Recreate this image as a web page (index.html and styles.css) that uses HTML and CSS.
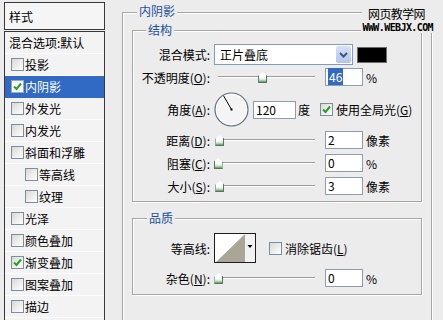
FILE: index.html
```html
<!DOCTYPE html>
<html lang="zh-CN">
<head>
<meta charset="utf-8">
<title>图层样式 - 内阴影</title>
<link rel="stylesheet" href="styles.css">
</head>
<body>
<div class="dialog">
  <aside class="styles-panel">
    <div class="panel-head">样式</div>
    <ul class="style-list">
      <li class="item plain">混合选项:默认</li>
      <li class="item"><span class="cb"></span>投影</li>
      <li class="item selected"><span class="cb"><svg viewBox="0 0 9 9" width="9" height="9"><path d="M1 4.5 L3.5 7 L8 1.5" stroke="#23a323" stroke-width="2" fill="none"/></svg></span>内阴影</li>
      <li class="item"><span class="cb"></span>外发光</li>
      <li class="item"><span class="cb"></span>内发光</li>
      <li class="item"><span class="cb"></span>斜面和浮雕</li>
      <li class="item sub"><span class="cb"></span>等高线</li>
      <li class="item sub"><span class="cb"></span>纹理</li>
      <li class="item"><span class="cb"></span>光泽</li>
      <li class="item"><span class="cb"></span>颜色叠加</li>
      <li class="item"><span class="cb"><svg viewBox="0 0 9 9" width="9" height="9"><path d="M1 4.5 L3.5 7 L8 1.5" stroke="#23a323" stroke-width="2" fill="none"/></svg></span>渐变叠加</li>
      <li class="item"><span class="cb"></span>图案叠加</li>
      <li class="item"><span class="cb"></span>描边</li>
    </ul>
  </aside>

  <section class="group outer">
    <span class="group-title t-outer">内阴影</span>

    <div class="group structure">
      <span class="group-title t-structure">结构</span>

      <div class="row r-blend">
        <span class="label">混合模式:</span>
        <div class="select">
          <span>正片叠底</span>
          <span class="select-btn"><svg width="9" height="6" viewBox="0 0 9 6"><path d="M1 1 L4.5 4.5 L8 1" stroke="#40557d" stroke-width="2" fill="none"/></svg></span>
        </div>
        <span class="swatch"></span>
      </div>

      <div class="row r-opacity">
        <span class="label">不透明度(<u>O</u>):</span>
        <div class="slider"><div class="track"><span class="thumb" style="left:46%"></span></div></div>
        <span class="num"><span class="hl">46</span></span>
        <span class="unit">%</span>
      </div>

      <div class="row r-angle">
        <span class="label">角度(<u>A</u>):</span>
        <svg class="dial" width="35" height="35" viewBox="0 0 35 35">
          <circle cx="17.5" cy="17.5" r="16.5" fill="#f4f4f4" stroke="#5f6f86" stroke-width="1.2"/>
          <circle cx="17.5" cy="17.5" r="15.2" fill="none" stroke="#ffffff" stroke-width="1"/>
          <line x1="17.5" y1="17.5" x2="9.5" y2="3.7" stroke="#000" stroke-width="1"/>
          <rect x="16.5" y="16.5" width="2" height="2" fill="#000"/>
        </svg>
        <span class="num num-wide">120</span>
        <span class="deg">度</span>
        <span class="cb cb-global"><svg viewBox="0 0 9 9" width="9" height="9"><path d="M1 4.5 L3.5 7 L8 1.5" stroke="#23a323" stroke-width="2" fill="none"/></svg></span>
        <span class="cb-label">使用全局光(<u>G</u>)</span>
      </div>

      <div class="row r-slider r-first">
        <span class="label">距离(<u>D</u>):</span>
        <div class="slider"><div class="track"><span class="thumb" style="left:2%"></span></div></div>
        <span class="num">2</span>
        <span class="unit">像素</span>
      </div>

      <div class="row r-slider">
        <span class="label">阻塞(<u>C</u>):</span>
        <div class="slider"><div class="track"><span class="thumb" style="left:0%"></span></div></div>
        <span class="num">0</span>
        <span class="unit">%</span>
      </div>

      <div class="row r-slider">
        <span class="label">大小(<u>S</u>):</span>
        <div class="slider"><div class="track"><span class="thumb" style="left:2%"></span></div></div>
        <span class="num">3</span>
        <span class="unit">像素</span>
      </div>
    </div>

    <div class="group quality">
      <span class="group-title t-quality">品质</span>

      <div class="row r-contour">
        <span class="label">等高线:</span>
        <span class="contour">
          <svg width="40" height="28" viewBox="0 0 40 28">
            <rect x="0" y="0" width="30" height="28" fill="#ffffff"/>
            <polygon points="1,28 30,0 30,28" fill="#a9a698"/>
            <rect x="30" y="0" width="10" height="28" fill="#f2f2f2"/>
            <polygon points="32.5,11 37.5,11 35,14" fill="#000"/>
          </svg>
        </span>
        <span class="cb cb-aa"></span>
        <span class="cb-label">消除锯齿(<u>L</u>)</span>
      </div>

      <div class="row r-noise">
        <span class="label">杂色(<u>N</u>):</span>
        <div class="slider"><div class="track"><span class="thumb" style="left:1%"></span></div></div>
        <span class="num">0</span>
        <span class="unit">%</span>
      </div>
    </div>
  </section>

  <div class="watermark">
    <span class="wm-cn">网页教学网</span>
    <span class="wm-en">WWW.WEBJX.COM</span>
  </div>
</div>
</body>
</html>
```

FILE: styles.css
```css
* { box-sizing: border-box; }

html, body {
  margin: 0;
  padding: 0;
}

body {
  background: #ececec;
  font-family: "Noto Sans CJK SC", "Noto Sans", sans-serif;
  font-size: 12px;
  color: #000;
  overflow: hidden;
}

.dialog {
  position: relative;
  display: flex;
  align-items: flex-start;
  width: 443px;
  height: 320px;
  overflow: hidden;
}

/* ---------- left styles list ---------- */
.styles-panel {
  width: 101px;
  margin: 2px 0 0 4px;
  flex: none;
}

.panel-head {
  height: 28px;
  border: 1px solid #383838;
  background: #f5f5f5;
  padding: 5px 0 0 4px;
  line-height: 18px;
  margin-bottom: 1px;
}

.style-list {
  list-style: none;
  margin: 0;
  padding: 0;
  border: 1px solid #383838;
  border-bottom: none;
  background: #f3f3f3;
  height: 300px;
}

.item {
  height: 22px;
  display: flex;
  align-items: center;
  padding-left: 6px;
  border-bottom: 1px solid #fcfcfc;
  white-space: nowrap;
}

.item.plain { padding-left: 4px; }
.item.sub { padding-left: 20px; }

.item.selected {
  background: #316ac5;
  color: #fff;
  border-bottom-color: #316ac5;
}

.cb {
  width: 13px;
  height: 13px;
  border: 1px solid #7d8ca0;
  background: linear-gradient(135deg, #d9d9d3, #ffffff);
  margin-right: 1px;
  flex: none;
  display: inline-flex;
  align-items: center;
  justify-content: center;
}

.item.selected .cb { background: #ffffff; border-color: #9aaac0; }

/* ---------- group boxes ---------- */
.group {
  position: relative;
  border: 1px solid #a6a6a6;
  box-shadow: inset 1px 1px 0 #ffffff, 1px 1px 0 #ffffff;
}

.group-title {
  position: absolute;
  top: -8px;
  line-height: 14px;
  padding: 0 2px;
  background: #ececec;
  color: #1d4f9e;
  white-space: nowrap;
}

.outer {
  width: 310px;
  height: 330px;
  margin: 12px 0 0 17px;
  padding: 17px 9px 0;
  flex: none;
}

.t-outer { left: 14px; top: -9px; }

.structure {
  height: 172px;
  padding-top: 13px;
}

.t-structure { left: 13px; }

.quality {
  height: 77px;
  margin-top: 16px;
  padding-top: 14px;
}

.t-quality { left: 14px; }

/* ---------- rows ---------- */
.row {
  display: flex;
  align-items: center;
}

.label {
  width: 77px;
  margin-right: 4px;
  text-align: right;
  flex: none;
  white-space: nowrap;
}

.r-blend { height: 21px; }
.r-opacity { height: 18px; margin-top: 3px; }
.r-angle { height: 35px; margin-top: 6px; }
.r-slider { height: 18px; margin-top: 5px; }
.r-slider.r-first { margin-top: 4px; }
.r-contour { height: 30px; }
.r-noise { height: 18px; margin-top: 6px; }

/* select */
.select {
  width: 139px;
  height: 21px;
  border: 1px solid #7f9db9;
  background: #fff;
  display: flex;
  align-items: center;
  justify-content: space-between;
  padding-left: 5px;
  flex: none;
}

.select-btn {
  width: 15px;
  height: 17px;
  margin-right: 1px;
  background: linear-gradient(#d6e0f8, #b3c5ee);
  border-radius: 2px;
  display: flex;
  align-items: center;
  justify-content: center;
}

.swatch {
  width: 30px;
  height: 16px;
  margin-left: 4px;
  background: #000;
  border: 1px solid #6b6b6b;
  flex: none;
}

/* slider */
.slider {
  position: relative;
  width: 104px;
  height: 18px;
  flex: none;
}

.track {
  position: absolute;
  left: 4px;
  width: 97px;
  top: 8px;
  height: 2px;
  border-top: 1px solid #9c9c9c;
  border-bottom: 1px solid #ffffff;
}

.thumb {
  position: absolute;
  top: -5px;
  width: 9px;
  height: 11px;
  margin-left: -4.5px;
  background: linear-gradient(#ffffff 55%, #bfeac4 80%, #3aa84a);
  border: 1px solid #6a6a6a;
  border-top: none;
  clip-path: polygon(0 35%, 50% 0, 100% 35%, 100% 100%, 0 100%);
}

/* numeric fields */
.num {
  width: 38px;
  height: 18px;
  margin-left: 7px;
  border: 1px solid #8f9db0;
  background: #fff;
  padding-left: 2px;
  line-height: 16px;
  flex: none;
}

.hl {
  background: #316ac5;
  color: #fff;
  padding: 0 1px;
}

.unit {
  margin-left: 3px;
  white-space: nowrap;
}

/* angle row */
.dial { flex: none; }

.num-wide {
  width: 43px;
  margin-left: 4px;
}

.deg { margin-left: 2px; }

.cb-global { margin-left: 10px; }

.cb-label {
  margin-left: 2px;
  white-space: nowrap;
}

/* contour */
.contour {
  width: 42px;
  height: 30px;
  border: 1px solid #1e1e1e;
  flex: none;
  display: block;
}

.contour svg { display: block; }

.cb-aa { margin-left: 13px; }

/* watermark overlay */
.watermark {
  position: absolute;
  left: 358px;
  top: 6px;
  width: 76px;
  display: flex;
  flex-direction: column;
  align-items: flex-end;
}

.wm-cn {
  font-size: 12px;
  line-height: 16px;
  padding: 0 9px 0 6px;
  background: #ececec;
  letter-spacing: -0.6px;
}

.wm-en {
  font-family: "DejaVu Sans Mono", monospace;
  font-weight: bold;
  font-size: 10px;
  line-height: 10px;
  padding: 1px 1px 0 2px;
  background: #ececec;
  letter-spacing: -0.6px;
}
```
